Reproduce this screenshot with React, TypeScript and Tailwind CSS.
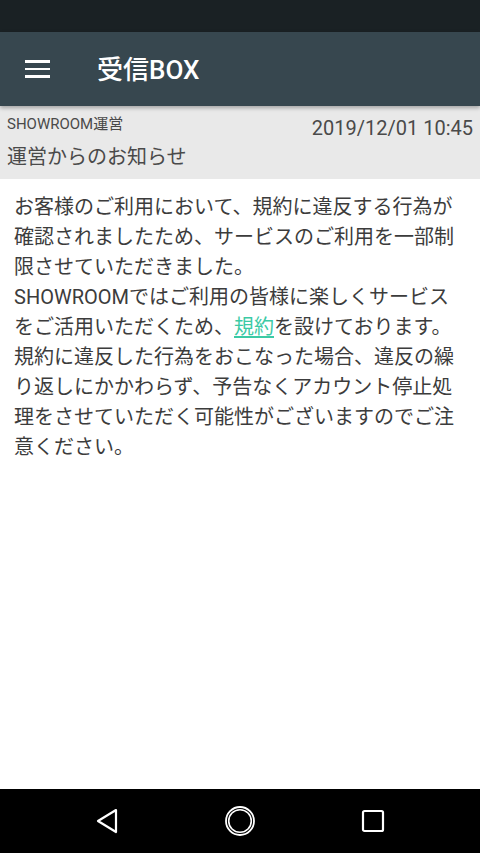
import React from 'react';

const jp = { fontFamily: 'Roboto, "Noto Sans CJK JP", sans-serif' };

const lines1 = [
  'お客様のご利用において、規約に違反する行為が',
  '確認されましたため、サービスのご利用を一部制',
  '限させていただきました。',
  'SHOWROOMではご利用の皆様に楽しくサービス',
];

const lines2 = [
  '規約に違反した行為をおこなった場合、違反の繰',
  'り返しにかかわらず、予告なくアカウント停止処',
  '理をさせていただく可能性がございますのでご注',
  '意ください。',
];

export default function App() {
  return (
    <div className="w-[480px] h-[853px] flex flex-col bg-white overflow-hidden" style={jp}>
      {/* status bar */}
      <div className="h-[32px] bg-[#1a2124]" />

      {/* app bar */}
      <div className="h-[74px] bg-[#37474f] flex items-center relative z-10 shadow-[0_2px_4px_rgba(0,0,0,0.3)]">
        <div className="w-[97px] flex pl-[25px]">
          <div className="flex flex-col gap-[5px]">
            <span className="block w-[25px] h-[2.5px] bg-white" />
            <span className="block w-[25px] h-[2.5px] bg-white" />
            <span className="block w-[25px] h-[2.5px] bg-white" />
          </div>
        </div>
        <h1 className="text-white text-[26px] font-medium leading-none mt-[2px]">受信BOX</h1>
      </div>

      {/* message header */}
      <div className="h-[73px] bg-[#e9e9e9] px-[7px] pt-[7px]">
        <div className="flex justify-between items-start">
          <span className="text-[15px] text-[#4a4a4a] leading-[20px] mt-[1px]">SHOWROOM運営</span>
          <span className="text-[20px] text-[#4a4a4a] leading-[26px] mt-[2px]">2019/12/01 10:45</span>
        </div>
        <p className="text-[20px] text-[#4a4a4a] leading-[26px] mt-[3px]">運営からのお知らせ</p>
      </div>

      {/* body */}
      <div className="flex-1 px-[14px] pt-[13px] text-[20px] leading-[30px] text-[#3c3c3c]">
        {lines1.map((l) => (
          <div key={l}>{l}</div>
        ))}
        <div>
          をご活用いただくため、
          <a className="text-[#3ccaa5] underline underline-offset-2">規約</a>
          を設けております。
        </div>
        {lines2.map((l) => (
          <div key={l}>{l}</div>
        ))}
      </div>

      {/* nav bar */}
      <div className="h-[64px] bg-black flex items-center justify-center">
        <div className="w-[133px] flex justify-center">
          <svg width="24" height="28" viewBox="0 0 24 28">
            <path d="M21 3 L3 14 L21 25 Z" fill="none" stroke="white" strokeWidth="2.2" strokeLinejoin="round" />
          </svg>
        </div>
        <div className="w-[133px] flex justify-center">
          <svg width="32" height="32" viewBox="0 0 32 32">
            <circle cx="16" cy="16" r="14" fill="none" stroke="white" strokeWidth="1.8" />
            <circle cx="16" cy="16" r="11.3" fill="none" stroke="white" strokeWidth="1.6" />
          </svg>
        </div>
        <div className="w-[133px] flex justify-center">
          <svg width="24" height="24" viewBox="0 0 24 24">
            <rect x="2" y="2" width="20" height="20" rx="1.5" fill="none" stroke="white" strokeWidth="2.2" />
          </svg>
        </div>
      </div>
    </div>
  );
}
